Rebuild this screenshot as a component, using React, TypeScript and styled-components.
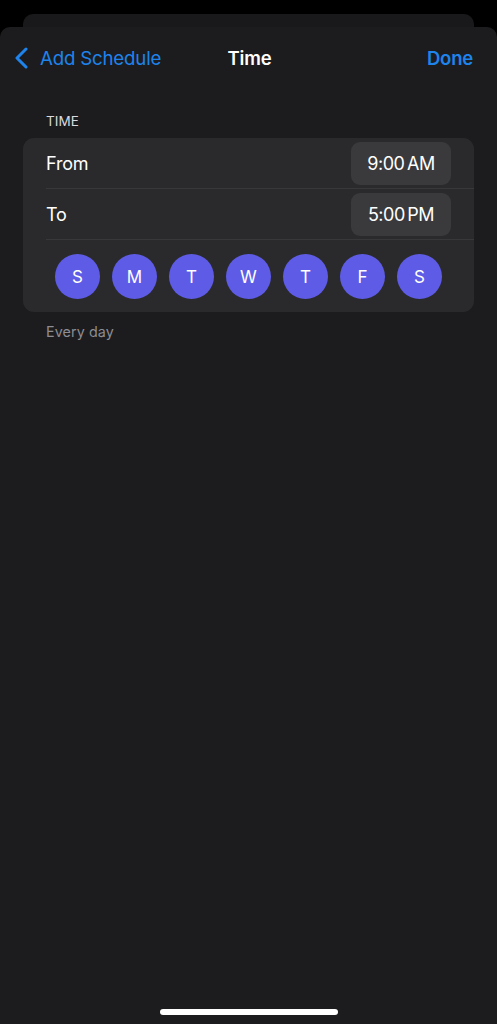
import React from 'react';
import styled, {createGlobalStyle} from "styled-components";

const GlobalStyle = createGlobalStyle`
    html, body {
        margin: 0;
        padding: 0;
        background: #000;
    }
    body {
        font-family: Inter, "Noto Sans", "Liberation Sans", sans-serif;
        -webkit-font-smoothing: antialiased;
    }
`

const days = ['S', 'M', 'T', 'W', 'T', 'F', 'S'];

const BackIcon = () => (
    <svg width="16" height="22" viewBox="0 0 16 22" fill="none">
        <polyline points="12,2 3,11 12,20" stroke="#1e84ec" strokeWidth="3" strokeLinecap="round" strokeLinejoin="round"/>
    </svg>
);

export default function App() {
    return (
        <>
            <GlobalStyle/>
            <Screen>
                <BackCard/>
                <Sheet>
                    <NavBar>
                        <BackButton>
                            <BackIcon/>
                            <span>Add Schedule</span>
                        </BackButton>
                        <NavTitle>Time</NavTitle>
                        <DoneButton>Done</DoneButton>
                    </NavBar>

                    <Section>
                        <SectionLabel>TIME</SectionLabel>
                        <Group>
                            <Row>
                                <RowLabel>From</RowLabel>
                                <TimePill>9:00 AM</TimePill>
                            </Row>
                            <Row>
                                <RowLabel>To</RowLabel>
                                <TimePill>5:00 PM</TimePill>
                            </Row>
                            <DaysRow>
                                {days.map((d, i) => (
                                    <DayCircle key={i} $active>{d}</DayCircle>
                                ))}
                            </DaysRow>
                        </Group>
                        <SectionFooter>Every day</SectionFooter>
                    </Section>

                    <Spacer/>
                    <HomeIndicator/>
                </Sheet>
            </Screen>
        </>
    );
}

const Screen = styled.div`
    min-height: 1024px;
    padding-top: 14px;
    box-sizing: border-box;
    background: #000;
    display: flex;
    flex-direction: column;
`

const BackCard = styled.div`
    height: 13px;
    margin: 0 23px;
    background: #19191b;
    border-radius: 10px 10px 0 0;
`

const Sheet = styled.div`
    flex: 1;
    display: flex;
    flex-direction: column;
    background: #1c1c1e;
    border-radius: 10px 10px 0 0;
`

const NavBar = styled.div`
    height: 62px;
    padding: 0 24px 0 14px;
    display: grid;
    grid-template-columns: 1fr auto 1fr;
    align-items: center;
`

const BackButton = styled.div`
    display: flex;
    align-items: center;
    gap: 10px;
    color: #1e84ec;
    font-size: 18.7px;
    letter-spacing: -0.2px;
`

const NavTitle = styled.div`
    color: #fff;
    font-size: 18.5px;
    font-weight: 600;
    letter-spacing: -0.2px;
    padding-left: 12px;
`

const DoneButton = styled.div`
    justify-self: end;
    color: #1e84ec;
    font-size: 18.5px;
    font-weight: 600;
    letter-spacing: -0.2px;
`

const Section = styled.div`
    padding: 24px 23px 0;
`

const SectionLabel = styled.div`
    padding-left: 23px;
    color: #d9d9de;
    font-size: 13.5px;
    line-height: 16px;
    letter-spacing: 0.1px;
    margin-bottom: 9px;
`

const Group = styled.div`
    background: #2a2a2c;
    border-radius: 11px;
    overflow: hidden;
`

const Row = styled.div`
    height: 50px;
    margin-left: 23px;
    padding-right: 23px;
    display: flex;
    align-items: center;
    justify-content: space-between;
    border-bottom: 1px solid #38383a;
`

const RowLabel = styled.div`
    color: #fff;
    font-size: 18px;
    letter-spacing: -0.2px;
`

const TimePill = styled.div`
    width: 100px;
    height: 43px;
    border-radius: 9px;
    background: #3a3a3c;
    color: #fff;
    font-size: 18px;
    letter-spacing: -0.5px;
    word-spacing: -2px;
    display: flex;
    align-items: center;
    justify-content: center;
`

const DaysRow = styled.div`
    display: flex;
    justify-content: center;
    gap: 12px;
    padding: 14px 0 13px;
`

const DayCircle = styled.div<{ $active?: boolean }>`
    width: 45px;
    height: 45px;
    border-radius: 50%;
    background: ${p => p.$active ? '#5e5ce6' : '#3a3a3c'};
    color: #fff;
    font-size: 17px;
    display: flex;
    align-items: center;
    justify-content: center;
`

const SectionFooter = styled.div`
    padding: 11px 0 0 23px;
    color: #8d8d93;
    font-size: 14.3px;
    letter-spacing: 0.1px;
`

const Spacer = styled.div`
    flex: 1;
`

const HomeIndicator = styled.div`
    align-self: center;
    width: 178px;
    height: 6px;
    border-radius: 3px;
    background: #fff;
    margin-bottom: 9px;
`
